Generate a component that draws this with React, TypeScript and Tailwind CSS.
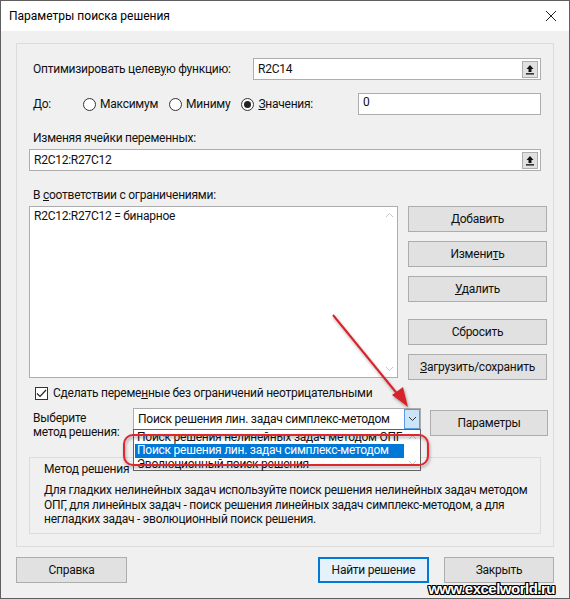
import React from "react";

const font = "font-['Roboto','Noto_Sans',sans-serif]";

function RefButton() {
  return (
    <div className="w-[16px] h-[17px] mr-[2px] bg-[#e1e1e1] border border-[#adadad] flex items-center justify-center">
      <svg width="10" height="11" viewBox="0 0 10 11">
        <path d="M5 1 L1.5 5 H3.5 V8 H6.5 V5 H8.5 Z" fill="#111" />
        <rect x="1" y="9.2" width="8" height="1.3" fill="#111" />
      </svg>
    </div>
  );
}

function Radio({ checked, children }: { checked?: boolean; children: React.ReactNode }) {
  return (
    <div className="flex items-center gap-[4px]">
      <div className="w-[13px] h-[13px] rounded-full border border-[#333] bg-white flex items-center justify-center">
        {checked && <div className="w-[7px] h-[7px] rounded-full bg-[#222]" />}
      </div>
      <span>{children}</span>
    </div>
  );
}

function Btn({ children, className = "" }: { children: React.ReactNode; className?: string }) {
  return (
    <div className={`h-[26px] shrink-0 bg-[#e1e1e1] border border-[#adadad] flex items-center justify-center ${className}`}>
      {children}
    </div>
  );
}

export default function App() {
  return (
    <div className={`relative w-[570px] h-[599px] bg-[#f0f0f0] border border-[#5f5f5f] text-[12px] tracking-[-0.25px] text-[#111] leading-[15px] whitespace-nowrap ${font}`}>
      {/* title bar */}
      <div className="h-[30px] bg-white flex items-center justify-between pl-[8px] pr-[12px]">
        <span className="text-[12px] text-black tracking-normal">Параметры поиска решения</span>
        <svg width="12" height="12" viewBox="0 0 12 12">
          <path d="M1 1 L11 11 M11 1 L1 11" stroke="#222" strokeWidth="1" />
        </svg>
      </div>

      <div className="px-[15px] pt-[12px]">
        {/* main group box */}
        <div className="h-[504px] border border-[#dcdcdc] pt-[14px] pl-[12px] pr-[12px]">
          <div className="flex items-center h-[22px]">
            <span className="pl-[4px] w-[224px]">
              Оптимизировать целев<u>у</u>ю функцию:
            </span>
            <div className="flex-1 h-[22px] bg-white border border-[#adadad] flex items-center justify-between pl-[4px]">
              <span>R2C14</span>
              <RefButton />
            </div>
          </div>

          <div className="flex items-center h-[22px] mt-[13px]">
            <span className="pl-[4px] w-[54px]">До:</span>
            <div className="flex items-center gap-[11px]">
              <Radio>Максимум</Radio>
              <Radio>Миниму</Radio>
              <Radio checked>
                <u>З</u>начения:
              </Radio>
            </div>
            <div className="ml-auto w-[183px] h-[22px] bg-white border border-[#adadad] pl-[4px] pt-[1px]">0</div>
          </div>

          <div className="mt-[16px] pl-[4px]">Изменяя ячейки переменных:</div>
          <div className="mt-[3px] h-[22px] bg-white border border-[#adadad] flex items-center justify-between pl-[4px]">
            <span>R2C12:R27C12</span>
            <RefButton />
          </div>

          <div className="mt-[17px] pl-[4px]">
            В <u>с</u>оответствии с ограничениями:
          </div>
          <div className="mt-[3px] flex -mr-[6px]">
            <div className="w-[369px] shrink-0 h-[172px] bg-white border border-[#adadad] flex">
              <div className="flex-1 pl-[4px] pt-[2px]">R2C12:R27C12 = бинарное</div>
              <div className="w-[16px] flex flex-col justify-between items-center py-[5px]">
                <svg width="9" height="6" viewBox="0 0 9 6">
                  <path d="M1 5 L4.5 1.5 L8 5" stroke="#c8c8c8" fill="none" />
                </svg>
                <svg width="9" height="6" viewBox="0 0 9 6">
                  <path d="M1 1 L4.5 4.5 L8 1" stroke="#c8c8c8" fill="none" />
                </svg>
              </div>
            </div>
            <div className="ml-[10px] w-[139px] shrink-0 flex flex-col">
              <Btn>
                <span><u>Д</u>обавить</span>
              </Btn>
              <Btn className="mt-[9px]">
                <span>Измени<u>т</u>ь</span>
              </Btn>
              <Btn className="mt-[9px]">
                <span><u>У</u>далить</span>
              </Btn>
              <Btn className="mt-[17px]">Сбросить</Btn>
              <Btn className="mt-[9px]">
                <span><u>З</u>агрузить/сохранить</span>
              </Btn>
            </div>
          </div>

          <div className="mt-[6px] flex items-center gap-[5px] pl-[6px]">
            <div className="w-[13px] h-[13px] border border-[#333] bg-white flex items-center justify-center">
              <svg width="11" height="9" viewBox="0 0 11 9">
                <path d="M1 4.5 L4 7.5 L10 1" stroke="#222" strokeWidth="1.2" fill="none" />
              </svg>
            </div>
            <span>
              Сделать переме<u>н</u>ные без ограничений неотрицательными
            </span>
          </div>

          <div className="mt-[7px] flex items-start -mr-[6px]">
            <div className="pl-[4px] w-[104px] shrink-0 pt-[3px] leading-[14px]">
              Выберите
              <br />
              метод решения:
            </div>
            <div className="w-[288px] shrink-0 h-[22px] bg-white border border-[#adadad] flex items-center">
              <span className="flex-1 pl-[4px]">Поиск решения лин. задач симплекс-методом</span>
              <div className="w-[16px] h-[20px] bg-[#cce4f7] border border-[#569de5] flex items-center justify-center">
                <svg width="9" height="6" viewBox="0 0 9 6">
                  <path d="M1 1 L4.5 4.5 L8 1" stroke="#333" fill="none" />
                </svg>
              </div>
            </div>
            <div className="ml-[9px] w-[118px] shrink-0 mt-[2px]">
              <Btn>Параметры</Btn>
            </div>
          </div>

          {/* method group */}
          <div className="mt-[18px] h-[77px] border border-[#dcdcdc] bg-[#f0f0f0] px-[14px]">
            <div className="mt-[4px]">Метод решения</div>
            <div className="mt-[6px] leading-[14.5px]">
              Для гладких нелинейных задач используйте поиск решения нелинейных задач методом
              <br />
              ОПГ, для линейных задач - поиск решения линейных задач симплекс-методом, а для
              <br />
              негладких задач - эволюционный поиск решения.
            </div>
          </div>
        </div>

        {/* bottom buttons */}
        <div className="mt-[10px] flex">
          <Btn className="w-[111px]">Справка</Btn>
          <div className="ml-auto flex gap-[15px]">
            <div className="w-[111px] h-[26px] bg-[#e5f1fb] border-2 border-[#0078d7] flex items-center justify-center">
              Найти решение
            </div>
            <Btn className="w-[110px]">Закрыть</Btn>
          </div>
        </div>
      </div>

      {/* open dropdown list */}
      <div className="absolute left-[132px] top-[428px] w-[288px] h-[42px] bg-white border border-[#646464] flex">
        <div className="flex-1 flex flex-col pt-[1px] leading-[13.3px]">
          <div className="pl-[3px]">Поиск решения нелинейных задач методом ОПГ</div>
          <div className="ml-[1px] pl-[2px] bg-[#0078d7] text-white">Поиск решения лин. задач симплекс-методом</div>
          <div className="pl-[3px]">Эволюционный поиск решения</div>
        </div>
        <div className="w-[16px] flex flex-col justify-between items-center py-[4px]">
          <svg width="9" height="6" viewBox="0 0 9 6">
            <path d="M1 5 L4.5 1.5 L8 5" stroke="#c8c8c8" fill="none" />
          </svg>
          <svg width="9" height="6" viewBox="0 0 9 6">
            <path d="M1 1 L4.5 4.5 L8 1" stroke="#c8c8c8" fill="none" />
          </svg>
        </div>
      </div>

      {/* red annotations */}
      <svg className="absolute left-0 top-0 pointer-events-none" width="570" height="599">
        <defs>
          <filter id="sh" x="-20%" y="-20%" width="140%" height="140%">
            <feDropShadow dx="1" dy="2" stdDeviation="1.5" floodColor="#000" floodOpacity="0.35" />
          </filter>
        </defs>
        <rect x="123" y="434" width="304" height="30" rx="9" fill="none" stroke="#e0252f" strokeWidth="2" filter="url(#sh)" />
        <g filter="url(#sh)">
          <line x1="332" y1="314" x2="398" y2="395" stroke="#d8232a" strokeWidth="2" />
          <path d="M407 406 L391 394 L402 386 Z" fill="#d8232a" />
        </g>
      </svg>

      {/* watermark */}
      <div className="absolute right-[14px] bottom-[2px] font-['Liberation_Sans',sans-serif] font-bold text-[15px] text-white tracking-[-0.5px] [text-shadow:1px_0_0_#000,-1px_0_0_#000,0_1px_0_#000,0_-1px_0_#000,1px_1px_0_#000,-1px_-1px_0_#000,1px_-1px_0_#000,-1px_1px_0_#000]">
        www.excelworld.ru
      </div>
    </div>
  );
}
